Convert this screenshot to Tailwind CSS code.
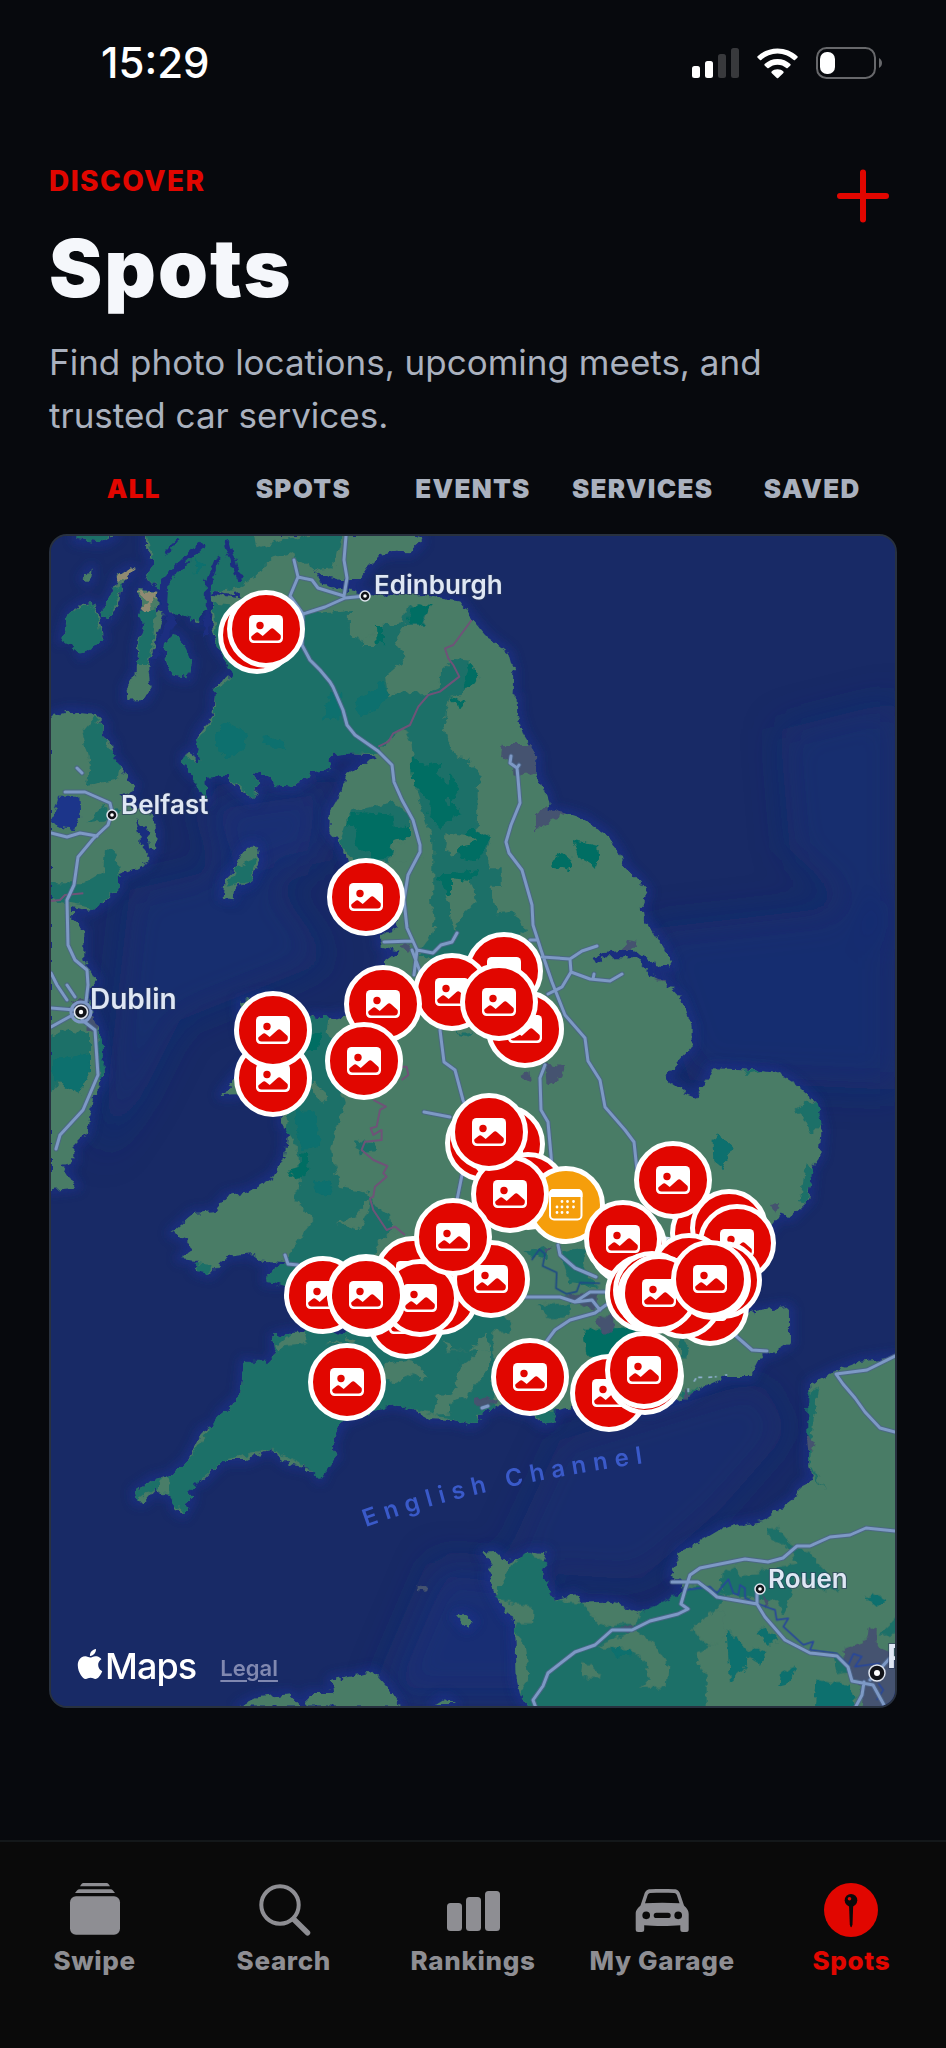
<!DOCTYPE html>
<html lang="en">
<head>
    <meta charset="UTF-8">
    <meta name="viewport" content="width=device-width, initial-scale=1.0">
    <title>Spots</title>
    <script src="https://cdn.jsdelivr.net/npm/@tailwindcss/browser@4"></script>
</head>
<body class="min-h-screen flex flex-col bg-[#07090d] text-white font-['Inter',sans-serif]">

    <!-- Status bar -->
    <div class="h-[126px] flex items-center justify-between pl-[101px] pr-16">
        <span class="text-[42px] leading-none font-medium">15:29</span>
        <div class="flex items-center gap-[18px]">
            <svg class="w-[47px] h-[30px]" viewBox="0 0 47 30" fill="#fff" aria-hidden="true">
                <rect y="18" width="8" height="12" rx="2.5"/>
                <rect x="13" y="13" width="8" height="17" rx="2.5"/>
                <rect x="26" y="6" width="8" height="24" rx="2.5" fill="#38393c"/>
                <rect x="39" width="8" height="30" rx="2.5" fill="#38393c"/>
            </svg>
            <svg class="w-[41px] h-[31px]" viewBox="0 0 41 31" fill="#fff" aria-hidden="true">
                <path d="M20.500 0.500C28.300 0.500 35.300 3.400 40.400 8.300Q41.100 9 40.400 9.700L38 12Q37.400 12.600 36.700 12A23.500 23.500 0 0 0 4.300 12Q3.600 12.600 3 12L.6 9.700Q-.1 9 .6 8.300C5.700 3.400 12.700 .5 20.500 .5Z"/>
                <path d="M20.500 11C25.500 11 30 12.900 33.400 16Q34 16.700 33.400 17.400L30.700 20Q30 20.600 29.300 20A13.200 13.200 0 0 0 11.700 20Q11 20.600 10.300 20L7.600 17.400Q7 16.700 7.600 16C11 12.900 15.500 11 20.500 11Z"/>
                <path d="M20.500 21.300C22.800 21.300 24.900 22.200 26.400 23.500Q27 24.200 26.400 24.900L21.200 30Q20.500 30.700 19.800 30L14.600 24.900Q14 24.200 14.600 23.500C16.100 22.200 18.200 21.300 20.500 21.300Z"/>
            </svg>
            <svg class="w-[66px] h-8" viewBox="0 0 66 32" aria-hidden="true">
                <rect x="1" y="1" width="58" height="30" rx="9.500" fill="none" stroke="#67686b" stroke-width="2"/>
                <rect x="4" y="5" width="15" height="22" rx="7" fill="#fff"/>
                <path d="M63 11C65 12 66 14 66 16S65 20 63 21Z" fill="#67686b"/>
            </svg>
        </div>
    </div>

    <main class="flex-1 px-[49px] pt-9">
        <header class="flex items-start justify-between">
            <div>
                <p class="text-[28px] leading-[38px] font-extrabold tracking-wider text-[#e10600]">DISCOVER</p>
                <h1 class="mt-5 text-[80px] leading-[96px] font-black tracking-wide text-[#f5f7fb]">Spots</h1>
            </div>
            <button class="size-[68px] flex items-center justify-center" aria-label="Add spot">
                <svg class="size-[54px]" viewBox="0 0 54 54" stroke="#e10600" stroke-width="6" stroke-linecap="round">
                    <path d="M27 3.500V50.500M4 27H50"/>
                </svg>
            </button>
        </header>
        <p class="mt-5 max-w-[760px] text-[35px] leading-[53px] text-[#aab1be]">Find photo locations, upcoming meets, and trusted car services.</p>

        <div class="mt-5 h-[52px] grid grid-cols-5 text-[26px] font-black tracking-wider text-[#aab1be]">
            <button class="text-[#e10600]">ALL</button>
            <button>SPOTS</button>
            <button>EVENTS</button>
            <button>SERVICES</button>
            <button>SAVED</button>
        </div>

        <!-- Map -->
        <section class="relative mt-5 aspect-[848/1174] overflow-hidden rounded-[18px] border-2 border-[#28313f] bg-[#182a66]" aria-label="Map of spots">
            <svg class="absolute inset-0 w-full h-full" viewBox="51 536 844 1170" font-family="Inter, sans-serif">
                <defs>
                    <filter id="soft" x="-20%" y="-20%" width="140%" height="140%"><feGaussianBlur stdDeviation="18"/></filter>
                    <filter id="shore" x="-20%" y="-20%" width="140%" height="140%"><feGaussianBlur stdDeviation="5"/></filter>
                    <filter id="rough" filterUnits="userSpaceOnUse" x="40" y="525" width="870" height="1195">
                        <feTurbulence type="fractalNoise" baseFrequency=".14" numOctaves="2" seed="4"/>
                        <feDisplacementMap in="SourceGraphic" scale="9" xChannelSelector="R" yChannelSelector="G"/>
                    </filter>
                    <g id="land">
                        <!-- Scotland, Northern Ireland, Isle of Man -->
                        <g transform="translate(40 525) scale(.3333)">
                            <path d="M320 30L322 80 340 110 318 165 365 190 365 235 400 268 430 225 452 240 462 290 475 296 472 250 520 230 515 300 530 360 590 440 580 455 550 460 525 500 520 570 480 620 470 650 478 712 468 712 455 680 435 690 432 715 455 745 490 765 490 800 500 830 495 755 525 742 560 752 600 795 640 825 652 800 655 778 640 742 665 745 690 750 705 780 760 785 800 760 805 742 870 735 872 690 925 685 1005 688 1010 700 945 730 920 745 905 800 870 860 868 915 905 960 915 985 925 1020 1000 1010 1030 1060 1075 1110 1075 1200H1360V355L1300 300 1270 255 1230 225 1150 210 1020 215 960 205 905 192 850 180 820 135 840 148 900 165 958 165 985 125 1020 90 1060 80 1110 82 1143 50 1130 30Z"/>
                            <path d="M295 195L355 200 350 260 380 240 350 330 325 430 332 490 310 525 262 527 260 490 290 440 295 360 310 300 305 250Z"/>
                            <path d="M370 360L405 325 435 360 437 400 455 410 445 460 395 450 383 410Z"/>
                            <path d="M65 345L90 262 130 235 155 232 178 280 190 345 150 370 125 390 115 350 90 310Z"/>
                            <path d="M182 270L222 190 232 155 270 130 284 135 245 180 238 225 210 280Z"/>
                            <path d="M110 30H225L190 52 110 45ZM130 160L155 130 150 170 138 170Z"/>
                            <path d="M30 575L90 560 170 570 192 600 190 640 213 655 218 700 240 720 265 765 282 780 270 805 240 812 280 845 330 860 348 920 345 975 330 970 325 920 290 878 300 920 298 950 325 985 325 1010 280 1035 240 1050 235 1090 190 1135 135 1110 165 1150 145 1160 95 1145 90 1205H30Z"/>
                            <path d="M650 962L658 1010 632 1070 580 1090 575 1120 548 1115 555 1060 590 1025 605 985 625 962Z"/>
                        </g>
                        <!-- North Sea coast -->
                        <g transform="translate(450 525) scale(.3333)">
                            <path d="M0 225L30 230 60 275 110 335 175 385 190 440 188 510 200 515 202 570 220 630 258 690 260 750 290 810 300 860 345 865 400 882 470 930 512 990 520 1020 560 1060 592 1100 578 1135 580 1210H0Z"/>
                        </g>
                        <!-- Wales, Irish east coast -->
                        <g transform="translate(40 900) scale(.3333)">
                            <path d="M1060 0L1070 80 1020 110 1025 140 1080 152 1035 185 1030 340 910 348 870 355 815 348 800 400 640 470 580 540 545 585 590 583 640 560 755 600 725 650 728 680 765 695 740 715 735 770 700 830 625 875 560 890 520 937 460 942 395 1000 440 1020 455 1050 420 1075 475 1080 470 1110 510 1122 560 1068 635 1060 665 1085 740 1090 680 1125 680 1145 715 1148 760 1130 1000 1110 1130 1120 1090 1210H1360V0Z"/>
                            <path d="M30 0L95 0 97 60 130 90 130 180 172 245 140 280 160 350 180 400 192 530 160 590 140 700 100 740 100 785 65 795 108 860 30 868Z"/>
                            <path d="M600 305L680 290 780 400 700 470 610 400Z"/>
                        </g>
                        <!-- Lincolnshire, East Anglia -->
                        <g transform="translate(450 900) scale(.3333)">
                            <path d="M0 0H575L582 60 600 80 640 140 665 200 620 195 570 160 540 148 460 160 432 170 442 188 460 172 500 172 560 172 600 225 650 250 695 300 725 375 725 440 650 525 655 545 700 575 738 590 765 550 785 505 880 508 980 518 1040 555 1095 605 1115 690 1108 770 1085 800 1075 900 1020 952 990 940 975 965 930 1020 880 1220H0Z"/>
                        </g>
                        <!-- West country, Brittany tips -->
                        <g transform="translate(40 1280) scale(.3333)">
                            <path d="M1100 -60L1060 60 940 160 900 165 790 153 700 170 705 210 690 245 670 255 612 245 600 350 540 405 535 430 485 455 470 490 440 545 385 590 340 598 285 635 290 662 310 665 345 625 360 640 385 645 410 670 405 685 430 702 455 655 440 640 470 592 485 605 550 540 620 540 690 508 745 550 800 560 830 575 840 597 850 565 887 530 875 500 905 425 1000 385 1060 373 1110 385 1170 418 1240 420 1290 432 1320 420 1320 400 1360 385V-60Z"/>
                            <path d="M600 1280L650 1255 750 1243 785 1280ZM802 1280V1242H880L875 1200 960 1185 1000 1175 1040 1220 1080 1280ZM1182 1275L1215 1255 1245 1275Z"/>
                            <path d="M1250 1010L1270 1005 1300 1025 1280 1042Z"/>
                        </g>
                        <!-- South coast, France -->
                        <g transform="translate(450 1280) scale(.3333)">
                            <path d="M0 -60H800L880 102 950 90 1010 80 1020 90V188L980 212 930 230 900 288 830 288 760 320 700 355 600 390 450 365 320 390 310 425 280 432 240 400 150 375 90 385 90 420 60 435 30 420 0 400Z"/>
                            <path d="M1360 228L1230 245 1150 275 1080 312 1085 420 1075 500 1075 560 1090 600 1050 620 1040 650 1000 680 940 722 820 745 760 780 690 815 662 890 705 908 690 940 620 985 565 1000 520 975 460 965 400 968 375 945 315 962 280 900 275 860 290 820 250 815 175 850 135 815 100 820 125 850 115 895 140 950 175 1010 195 1020 200 1200 210 1240 245 1300H1360Z"/>
                        </g>
                    </g>
                </defs>

                <rect x="49" y="534" width="850" height="1176" fill="#182a66"/>
                <g filter="url(#soft)" fill="#1a2f78">
                    <path d="M780 730L900 700V950L790 850Z" opacity=".5"/>
                    <path d="M640 930L900 900V1090L690 1080Z" opacity=".55"/>
                    <path d="M560 1440L760 1380 790 1430 720 1510 640 1580 500 1570Z" opacity=".4"/>
                    <path d="M440 1560L540 1580 560 1700H380Z" opacity=".8"/>
                    <path d="M130 890L260 860 330 960 180 1020 140 1100 100 1160Z" opacity=".5"/>
                    <path d="M200 800L330 780 320 860 230 880Z" opacity=".8"/>
                </g>
                <use href="#land" fill="#1b3190" stroke="#1b3190" stroke-width="30" stroke-linejoin="round" filter="url(#shore)" opacity=".6"/>
                <g filter="url(#rough)">
                    <use href="#land" fill="#487b66"/>

                    <!-- Highland and moorland tints -->
                    <g transform="translate(40 525) scale(.3333)">
                        <g fill="#1f7068">
                            <path d="M320 24H640L650 70 740 40 905 24 880 130 830 135 750 85 690 100 650 150 600 190 520 200 475 290 400 265 365 235 365 190 320 165 340 110Z"/>
                            <path d="M520 235L740 260 850 262 930 255 930 330 1000 358 1030 300 1090 295 1100 250 1170 240 1150 300 1090 300 1065 350 1100 400 1035 455 1045 510 1130 495 1150 512 1240 470 1210 600 1240 690 1270 700 1315 740 1310 930 1345 1000 1350 1200H1180L1180 950 1130 800 1115 660 1090 610 1010 680 872 690 870 735 805 742 800 760 760 785 705 780 690 750 640 742 655 780 640 825 560 752 495 755 500 830 432 715 435 690 478 712 470 650 525 570 525 500 580 450 530 360Z"/>
                            <path d="M295 260L350 250 340 330 325 420 290 420 310 300ZM370 360L405 325 435 360 455 410 445 460 395 450ZM65 345L90 262 155 232 190 345 125 390ZM182 270L222 190 250 170 210 280ZM110 24H225L190 52 110 45Z"/>
                            <path d="M125 625L165 575 190 600 190 640 240 720 230 765 140 780 150 720ZM140 895L190 845 240 860 190 890ZM195 975L230 980 240 1060 235 1090 190 1130 160 1150 30 1125V1075L130 1075 190 1040ZM590 1025L650 1000 632 1070 560 1085Z"/>
                            <path d="M930 860L1060 830 1110 870 1110 935 1060 945 1050 1010 940 1010 900 950Z"/>
                            <path d="M1200 440L1240 405 1290 410 1310 450 1270 490 1200 500Z"/>
                        </g>
                        <g fill="#487b66">
                            <path d="M960 360L1030 300 1010 360ZM1220 925L1290 940 1255 985 1215 975ZM1130 930L1060 960 1060 1010 1150 1000ZM1225 1070L1300 1060 1310 1150 1245 1190 1220 1110Z"/>
                        </g>
                        <g fill="#096f6e">
                            <path d="M525 620L560 590 620 620 610 680 560 700 525 660ZM665 630L730 645 740 675 665 655ZM945 530L1030 470 1045 510 1020 550 960 575ZM870 510L905 500 900 580 848 583ZM470 100L500 120 460 150Z"/>
                        </g>
                        <g fill="#006e64">
                            <path d="M1100 295L1110 260 1140 235 1172 240 1145 297ZM1008 300H1032V355H1010ZM1265 490L1290 450 1285 415 1312 450 1300 480ZM1225 520L1270 530 1265 550Z"/>
                            <path d="M1115 695L1150 720 1210 710 1190 740 1250 800 1210 830 1260 865 1200 910 1165 870 1170 830 1120 780ZM920 870L980 862 1060 870 1065 905 1110 910 1110 935 1060 945 1050 1000 1000 1000 945 960 950 910 920 900ZM1235 940L1290 960 1350 930 1330 1000 1250 1010ZM1190 1050L1280 1050 1225 1110Z"/>
                        </g>
                        <g fill="#8f8a72">
                            <path d="M295 200L355 200 350 220 320 262 300 255 325 230ZM225 162L270 130 284 135 255 168Z"/>
                        </g>
                        <!-- lochs -->
                        <g fill="none" stroke="#1b2f80" stroke-linejoin="round">
                            <path d="M490 55L430 110 375 165 370 240 395 290 340 400" stroke-width="22"/>
                            <path d="M535 95L505 170 505 240 500 330M560 50L580 120 600 165" stroke-width="15"/>
                            <path d="M415 40L375 90M515 205L600 218 580 200" stroke-width="9"/>
                        </g>
                        <path d="M55 815H118L120 860 105 915 60 908 38 882Z" fill="#1c358a"/>
                    </g>
                    <g transform="translate(450 525) scale(.3333)">
                        <path d="M0 700L55 698 60 725 95 745 75 800 70 900 122 940 90 1030H155V1085H120L150 1200H85L80 1100 30 1060 0 1060ZM0 405L60 410 75 450 30 510 0 515Z" fill="#1f7068"/>
                        <path d="M0 750L30 790 5 830 35 865 0 880ZM20 960L70 905 122 940 80 1010 30 1000ZM60 412L82 460 40 490ZM0 515L45 530 30 550ZM308 1005L340 980 368 1005 360 1035 310 1025ZM370 945L445 960 447 990 435 1025 385 1000ZM0 1045L90 1035 60 1070 0 1058Z" fill="#006e64"/>
                        <path d="M0 925L50 930 75 950 30 960 20 985 0 990ZM0 1060L60 1065 80 1140 50 1200H0Z" fill="#487b66"/>
                        <path d="M162 657H238L258 690V742L225 750 190 745 190 720 155 695ZM258 865L295 850 350 865 300 890 258 918Z" fill="#45526f"/>
                    </g>
                    <g transform="translate(40 900) scale(.3333)">
                        <g fill="#1f7068">
                            <path d="M1170 0H1220L1240 90 1310 20V0H1360V110L1280 140 1200 180 1130 165 1190 80Z"/>
                            <path d="M800 350L865 352 860 400 910 430 900 560 915 610 870 740 900 860 985 880 1010 920 1050 945 1055 990 1010 1040 1000 1100 740 1160 680 1145 680 1125 740 1090 760 1040 820 960 760 890 780 850 770 740 740 690 750 600Z"/>
                            <path d="M30 410L80 390 150 400 150 470 120 580 60 550 30 580ZM940 720L1000 730 1005 750 960 760ZM100 0L170 10 160 30ZM172 390L192 430 190 540 178 540Z"/>
                            <path d="M470 1090L515 1095 510 1122 475 1115Z"/>
                        </g>
                        <path d="M760 630L830 640 840 740 790 750 770 700ZM820 840L880 850 865 890 830 880ZM40 480L150 460 150 520 120 580 40 540Z" fill="#096f6e"/>
                        <path d="M780 755L805 760 800 830 765 838 748 810 780 800ZM790 400L850 400 830 450 800 460Z" fill="#006e64"/>
                        <path d="M815 545L865 590 850 608 820 580ZM895 970L950 945 990 890 985 930 960 990ZM1010 1030L1070 990 1130 1010 1040 1050Z" fill="#487b66"/>
                        <path d="M1085 135L1110 130 1125 150 1100 155ZM90 310L130 295 175 380 160 400 100 340Z" fill="#45526f"/>
                    </g>
                    <g transform="translate(450 900) scale(.3333)">
                        <path d="M0 130L40 40 85 0H130L140 40 190 35 230 90 200 110 40 190H0ZM1035 630L1070 605 1100 605 1115 670 1085 700 1060 650ZM1070 790L1090 800 1070 905 1050 900ZM880 510L940 515 890 525ZM215 1060L290 1035 290 1075ZM330 1060L405 1040 400 1100 440 1160 360 1150ZM10 400L70 395 60 410Z" fill="#1f7068"/>
                        <path d="M800 702L845 740 820 805 790 780 788 720Z" fill="#096f6e"/>
                        <path d="M515 150L530 120 560 125 545 150ZM205 525L235 515 240 545ZM285 490L345 500 335 530 290 555ZM610 235L640 240 650 250ZM960 915L988 912 975 940ZM280 1040L305 1040 290 1065Z" fill="#45526f"/>
                    </g>
                    <g transform="translate(40 1280) scale(.3333)">
                        <path d="M1100 -60L1060 60 940 160 790 153 700 170 705 210 690 245 612 245 600 350 540 405 440 545 385 590 340 598 285 635 290 662 345 625 385 645 430 702 455 655 440 640 550 540 690 508 800 560 840 597 887 530 875 500 905 425 1060 373 1290 432 1320 400 1360 385V-60Z" fill="#1f7068"/>
                        <path d="M705 200L760 155 795 155 800 190 740 195 715 215ZM855 190L890 180 910 190ZM915 170L945 180 930 190ZM1030 250L1100 240 1120 245 1165 290 1150 300 1125 280 1060 310 1030 290ZM1210 170L1230 200 1310 190 1340 160 1350 210 1220 212ZM1350 190L1350 260 1280 350 1240 360 1240 400 1180 405 1190 350 1240 340 1260 260 1310 220ZM350 635L370 585 385 600 385 640ZM795 560L820 575 795 575Z" fill="#4a7d68"/>
                        <path d="M1310 355L1350 350V375L1305 375ZM1130 915L1160 920 1155 935 1130 930Z" fill="#45526f"/>
                    </g>
                    <g transform="translate(450 1280) scale(.3333)">
                        <g fill="#1f7068">
                            <path d="M0 210L60 212 75 180 0 160ZM70 110L150 90 185 135 180 160 110 150ZM0 220L40 260 0 330ZM0 370L70 385 90 420 60 435 0 400ZM245 395L320 395 310 425 280 432ZM690 170L720 200 715 235 690 235ZM260 75L360 70 350 115 300 118ZM690 340L740 325 710 360Z"/>
                            <path d="M135 950L180 860 230 820 290 850 275 880 315 962 400 968 440 1030 480 1040 540 1020 565 1000 690 940 720 920 760 915 830 950 780 1010 730 1040 730 1060 780 1100 740 1120 750 1170 770 1180V1300H245L210 1240 235 1200 225 1100 195 1050 200 1030 250 1030 250 980 190 970Z"/>
                            <path d="M955 745L985 745 1020 790 1080 820 1170 930 1110 930 1040 880 1010 990 1000 1000 980 960 920 960 810 940 815 880 860 855 870 890 950 870 1040 850 1020 810 955 770ZM1075 340L1105 320 1085 460 1080 560 1130 630 1085 580 1075 540ZM1350 1000L1285 1070 1350 1060ZM1150 1120L1230 1165 1160 1180Z"/>
                        </g>
                        <g fill="#096f6e">
                            <path d="M830 1050L860 1075 900 1120 880 1170 840 1205ZM990 1180L1035 1160 1020 1210 985 1220ZM1250 955L1270 940 1310 960 1280 980ZM920 1060L950 1040 985 1085 950 1090ZM880 1120L920 1105 950 1120 930 1150ZM1100 1200L1200 1215 1225 1300H1090ZM480 1110L520 1085 550 1120 500 1130Z"/>
                        </g>
                        <path d="M400 150L560 140 540 240 410 230Z" fill="#006e64"/>
                        <path d="M440 1100L530 1060 560 1050 620 1100 655 1160 650 1220 570 1225 600 1200 590 1150 540 1110ZM400 1150L420 1150 455 1195 395 1190ZM725 1050L780 1000 825 990 825 1070 780 1100ZM400 968L500 970 570 1000 560 1030 460 1035 420 1000Z" fill="#487b66"/>
                        <path d="M350 50L440 35 440 90 380 70ZM440 120L490 100 490 160 460 160ZM75 355L140 360 110 385 75 375ZM1070 470L1095 485 1085 515 1075 510ZM510 1045L545 1030 540 1055ZM1180 1110L1255 1080 1260 1045 1280 1040V1090L1350 1150V1300H1230L1240 1215 1210 1200 1190 1160ZM935 940L960 960 950 985ZM705 330L730 340 705 360Z" fill="#45526f"/>
                    </g>
                </g>

                <!-- Rivers -->
                <g fill="none" stroke-linejoin="round" stroke-width="5">
                    <path transform="translate(450 900) scale(.3333)" stroke="#1e4a86" d="M245 1080L268 1048 285 1062 278 1098 320 1118 318 1165 350 1182 380 1175 390 1148 450 1150"/>
                    <path transform="translate(450 1280) scale(.3333)" stroke="#28479a" d="M710 930L780 920 800 940 835 898 850 940 865 945 870 915 885 925 885 955 920 970 960 985 975 990 980 1020 1015 1015 1000 1040 1060 1095 1090 1085 1080 1110 1160 1120 1195 1155 1210 1122 1235 1130 1215 1160 1290 1150M1285 1210L1300 1230 1280 1260"/>
                    <path transform="translate(450 1280) scale(.3333)" stroke="#8fb0cf" stroke-dasharray="12 8" d="M732 305L740 292 760 292M775 292L800 290M825 285H832M715 325V338"/>
                </g>

                <!-- Borders -->
                <g fill="none" stroke="#6f5378" stroke-linejoin="round">
                    <path transform="translate(40 525) scale(.3333)" stroke-width="6" d="M1295 285L1240 360 1215 370 1225 400 1240 420 1258 455 1200 500 1165 510 1135 545 1110 600 1060 625 1045 650 1015 665M33 1128L60 1125 75 1110 130 1105"/>
                    <path transform="translate(40 900) scale(.3333)" stroke-width="6" d="M1085 540L1105 525 1100 500 1080 500M1000 600L1038 620 1020 630 1010 680 992 685 1000 705 1025 690 1025 720 975 725 965 750 1000 780 1042 798 1030 820 1040 830 1005 860 1000 890 990 895 1000 930 1040 990 1065 980 1095 1005"/>
                </g>

                <!-- Motorways: dark casing first, then the line -->
                <defs>
                    <g id="roads">
                        <path d="M346 536L344 560 347 578 344 596M294 560L298 577 290 596 303 614 325 607 345 598 365 596M298 577L312 580 318 588 344 596M303 614L302 645 310 660 320 670 330 682 333 687 343 710 347 725 355 735 378 751 392 765 394 782 402 800 413 820 420 845 420 852 408 875 404 900 407 928 417 950 414 975M417 950L433 953 441 945 452 942 457 933M384 942L412 941M412 950L425 985"/>
                        <path d="M511 756L510 763 517 768 519 765M517 768L518 778 520 803 511 825 506 842 509 853 522 870 532 905 533 925 541 950 552 982 565 1015 585 1038 588 1061 600 1080 605 1107 625 1130 634 1142 637 1170M542 957L570 959 582 951 597 946M570 959L571 972 562 987 548 994M571 972L590 979 610 981 622 974M593 979L594 974M530 940L536 940"/>
                        <path d="M545 1065L540 1078 541 1110 548 1122 551 1155 552 1170M440 1030L444 1062 455 1070 463 1100 468 1112M424 1112L450 1117M462 1175L457 1200M558 1245L560 1255 575 1268 596 1277M525 1297L560 1297 575 1302 590 1292 606 1292M575 1302L592 1300 600 1310M606 1305L595 1313 570 1320 555 1330 546 1342M736 1336L752 1350 767 1351"/>
                        <path d="M65 792L85 792 110 803 112 812 108 825 93 839 78 857 74 885 67 900 68 945 75 960 87 970 88 985 86 1002M51 833L67 837 80 833 97 836M51 973L57 985 67 1000M67 985L75 997M51 1008L75 1010M51 1027L78 1012M82 1020L95 1030 98 1075 83 1110 60 1135 56 1149M77 768L82 773M285 1255L288 1264 298 1265"/>
                        <path d="M895 1356L867 1370 836 1374 843 1384 855 1398 865 1412 880 1428 895 1432M672 1582L698 1582 710 1591 717 1597 757 1604 765 1617 785 1640 810 1653 837 1656 848 1667 852 1681 873 1685M757 1604V1588M895 1531L866 1528 850 1535 830 1537 810 1546 797 1546 783 1558 768 1562 745 1559 700 1568 690 1575 685 1590 681 1604 688 1609 678 1614 650 1621 632 1630 612 1630 595 1645 575 1652 548 1673 543 1686 533 1700 536 1708M864 1682L862 1695 855 1708M873 1685L884 1705M870 1680L890 1658M482 1408L488 1406"/>
                    </g>
                </defs>
                <use href="#roads" fill="none" stroke="#4c6489" stroke-width="5" stroke-linejoin="round" stroke-linecap="round" opacity=".8"/>
                <use href="#roads" fill="none" stroke="#7d99c5" stroke-width="3" stroke-linejoin="round" stroke-linecap="round"/>
                <circle cx="81" cy="1012" r="10" fill="none" stroke="#7d97c6" stroke-width="3"/>
                <path d="M661 1237L668 1238 661 1243Z" fill="#3f7de8" stroke="#dbe7fb" stroke-width="2"/>

                <!-- City dots -->
                <g fill="#111318" stroke="#dfe5ee" stroke-width="1.5">
                    <circle cx="365" cy="596" r="5"/><circle cx="112" cy="815" r="5"/><circle cx="81" cy="1012" r="6.500"/><circle cx="760" cy="1589" r="5"/><circle cx="877" cy="1673" r="8"/>
                </g>
                <g fill="#fff">
                    <circle cx="365" cy="596" r="1.800"/><circle cx="112" cy="815" r="1.800"/><circle cx="81" cy="1012" r="2.200"/><circle cx="760" cy="1589" r="1.800"/><circle cx="877" cy="1673" r="3"/>
                </g>

                <g fill="#dfe7f4" stroke="#2b3a5c" stroke-opacity=".6" stroke-width="2" paint-order="stroke" font-weight="600" font-size="26">
                    <text x="374" y="594">Edinburgh</text>
                    <text x="121" y="814">Belfast</text>
                    <text x="90" y="1009" font-size="28">Dublin</text>
                    <text x="768" y="1588">Rouen</text>
                    <text x="887" y="1668" font-size="32" font-weight="700">P</text>
                </g>
                <path id="channel" d="M366 1527Q490 1482 690 1457" fill="none"/>
                <text fill="#3a5ac9" font-size="24" font-weight="600" letter-spacing="7"><textPath href="#channel">English Channel</textPath></text>
            </svg>

            <div id="pins"></div>

            <div class="absolute left-6 bottom-4 flex items-center">
                <svg class="size-[30px] mb-1" viewBox="0 0 24 24" fill="#fff" aria-hidden="true">
                    <path d="M12.152 6.896c-.948 0-2.415-1.078-3.960-1.040-2.040.027-3.910 1.183-4.961 3.014-2.117 3.675-.546 9.103 1.519 12.090 1.013 1.454 2.208 3.090 3.792 3.039 1.520-.065 2.090-.987 3.935-.987 1.831 0 2.350.987 3.960.948 1.637-.026 2.676-1.480 3.676-2.948 1.156-1.688 1.636-3.325 1.662-3.415-.039-.013-3.182-1.221-3.220-4.857-.026-3.040 2.480-4.494 2.597-4.559-1.429-2.090-3.623-2.324-4.390-2.376-2-.156-3.675 1.090-4.610 1.090zM15.530 3.830c.843-1.012 1.400-2.427 1.245-3.830-1.207.052-2.662.805-3.532 1.818-.780.896-1.454 2.338-1.273 3.714 1.338.104 2.715-.688 3.559-1.701"/>
                </svg>
                <span class="text-[36px] leading-[48px] font-medium tracking-tight">Maps</span>
                <a href="#" class="ml-6 mt-1 text-[22px] font-semibold text-[#8088b0] underline underline-offset-4 decoration-2">Legal</a>
            </div>
        </section>
    </main>

    <!-- Tab bar -->
    <nav class="h-[208px] border-t-2 border-[#14181a] bg-[#0a0a0a] pt-[39px] grid grid-cols-5 items-start text-[26px] leading-9 font-extrabold tracking-wide text-[#8e8e93]">
        <a href="#" class="flex flex-col items-center gap-1.5">
            <svg class="size-14" viewBox="0 0 56 56" fill="currentColor" aria-hidden="true">
                <rect x="3" y="15.300" width="50" height="38.400" rx="6"/>
                <path d="M10 9.500Q11 8.300 12.500 8.300H43.500Q45 8.300 46 9.500L48 12H8ZM14.500 3Q15.200 2 16.500 2H39.500Q40.800 2 41.500 3L43 5.300H13Z"/>
            </svg>
            Swipe
        </a>
        <a href="#" class="flex flex-col items-center gap-1.5">
            <svg class="size-14" viewBox="0 0 56 56" fill="none" stroke="currentColor" stroke-linecap="round" aria-hidden="true">
                <circle cx="24" cy="24" r="18.700" stroke-width="4"/>
                <path d="M38 38.500L51.500 51.800" stroke-width="5.500"/>
            </svg>
            Search
        </a>
        <a href="#" class="flex flex-col items-center gap-1.5">
            <svg class="size-14" viewBox="0 0 56 56" fill="currentColor" aria-hidden="true">
                <rect x="2" y="22" width="15" height="28" rx="3.500"/>
                <rect x="21" y="16" width="15" height="34" rx="3.500"/>
                <rect x="40" y="10" width="15" height="40" rx="3.500"/>
            </svg>
            Rankings
        </a>
        <a href="#" class="flex flex-col items-center gap-1.5">
            <svg class="size-14" viewBox="0 0 56 56" fill="currentColor" fill-rule="evenodd" aria-hidden="true">
                <path d="M1.700 33C1.700 29 4 27 6.500 24.500L10.200 13.500C11.500 9.600 13 8.500 16.500 8.300C24 7.800 32.500 7.800 40 8.300C43.500 8.500 45 9.600 46.300 13.500L50 24.500C52.500 27 54.700 29 54.700 33V48.500Q54.700 51 52.200 51H48.800Q46.300 51 46.300 48.500V44.300C36 45.300 20.500 45.300 10.200 44.300V48.500Q10.200 51 7.700 51H4.200Q1.700 51 1.700 48.500ZM11 22.300C22 21.400 34.500 21.400 45.500 22.300L43 14.500C42.400 12.800 41.800 12.200 40 12C32.500 11.500 24 11.500 16.500 12C14.700 12.200 14.100 12.800 13.500 14.500ZM12.200 30.500A3.800 3.800 0 1 0 12.200 38.200A3.800 3.800 0 1 0 12.200 30.500ZM44.200 30.500A3.800 3.800 0 1 0 44.200 38.200A3.800 3.800 0 1 0 44.200 30.500ZM22.400 31.700A2.700 2.700 0 0 0 22.400 37.100H34A2.700 2.700 0 0 0 34 31.700Z"/>
            </svg>
            My Garage
        </a>
        <a href="#" class="flex flex-col items-center gap-1.5 text-[#e10600]" aria-current="page">
            <svg class="size-14" viewBox="0 0 56 56" aria-hidden="true">
                <circle cx="28" cy="29" r="27" fill="currentColor"/>
                <circle cx="28" cy="19.300" r="6.300" fill="#0a0a0a"/>
                <path d="M26 24H30.200L29.500 43.500Q28.100 49 26.800 43.500Z" fill="#0a0a0a"/>
                <circle cx="26.500" cy="17.700" r="1.800" fill="currentColor"/>
            </svg>
            Spots
        </a>
    </nav>

    <!-- Pin glyphs -->
    <svg class="hidden">
        <symbol id="photo" viewBox="0 0 34 28">
            <rect width="34" height="28" rx="4.500" fill="#fff"/>
            <circle cx="11" cy="10.500" r="3.700" fill="#e10600"/>
            <path d="M2.200 22.500Q2 21.700 2.800 21.100L6.500 18Q8.200 16.700 9.900 18L13.700 21 21.500 14Q23.200 12.600 24.900 14L31.300 19.700Q31.900 20.300 31.800 21.500V22.500Q31.500 25.500 28.500 25.500H5.500Q2.500 25.500 2.200 22.500Z" fill="#e10600"/>
        </symbol>
        <symbol id="calendar" viewBox="0 0 34 32">
            <rect x="1" y="1" width="31.500" height="29.500" rx="4" fill="none" stroke="#fff" stroke-width="2"/>
            <path d="M0 8V5Q0 0 5 0H28.500Q33.500 0 33.500 5V8Z" fill="#fff"/>
            <path d="M13 12.500h.01M18.500 12.500h.01M24.500 12.500h.01M8 18h.01M13 18h.01M18.500 18h.01M24.500 18h.01M8 23.500h.01M13 23.500h.01M18.500 23.500h.01" stroke="#fff" stroke-width="2.800" stroke-linecap="round"/>
        </symbol>
    </svg>

    <script>
        // x, y of each pin's centre in map units, back to front
        const MAP = { x: 51, y: 536, w: 844, h: 1170 };
        const pins = [
            [257, 635], [266, 629], [366, 897], [273, 1078], [273, 1030],
            [504, 971], [525, 1029], [452, 992], [499, 1002], [383, 1004], [364, 1061],
            [484, 1143], [506, 1144], [528, 1191], [566, 1205, "event"], [510, 1194], [489, 1132],
            [406, 1320], [413, 1275], [440, 1296], [491, 1279], [420, 1298], [453, 1237],
            [323, 1295], [367, 1298], [366, 1293], [366, 1295], [347, 1382],
            [709, 1233], [729, 1228], [737, 1243], [673, 1180], [628, 1246], [623, 1239],
            [710, 1307], [683, 1300], [644, 1293], [689, 1272], [652, 1290], [656, 1295],
            [723, 1280], [659, 1293], [712, 1281], [710, 1279],
            [530, 1377], [609, 1393], [645, 1376], [644, 1370]
        ];
        const layer = document.getElementById("pins");

        pins.forEach(([x, y, type]) => {
            const btn = document.createElement("button");
            const isEvent = type === "event";
            btn.className = "absolute size-[78px] -translate-x-1/2 -translate-y-1/2 rounded-full border-[5px] border-white flex items-center justify-center " + (isEvent ? "bg-[#f59e0b]" : "bg-[#e10600]");
            btn.style.left = (x - MAP.x) / MAP.w * 100 + "%";
            btn.style.top = (y - MAP.y) / MAP.h * 100 + "%";
            btn.setAttribute("aria-label", isEvent ? "Event" : "Photo spot");
            btn.innerHTML = isEvent
                ? '<svg class="w-[34px] h-8"><use href="#calendar"/></svg>'
                : '<svg class="w-[34px] h-7"><use href="#photo"/></svg>';
            layer.appendChild(btn);
        });
    </script>
</body>
</html>
